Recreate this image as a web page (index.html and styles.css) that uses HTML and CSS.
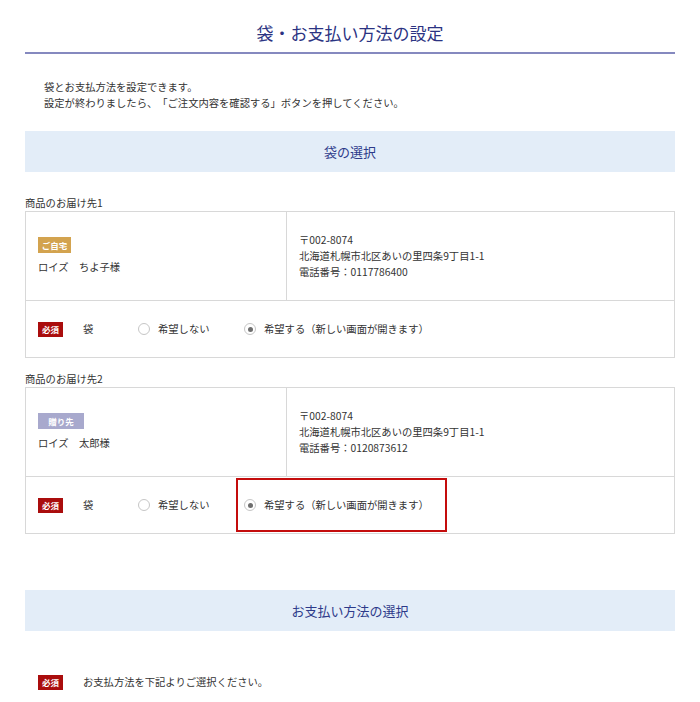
FILE: index.html
```html
<!DOCTYPE html>
<html lang="ja">
<head>
<meta charset="utf-8">
<title>袋・お支払い方法の設定</title>
<link rel="stylesheet" href="styles.css">
</head>
<body>
<div class="page">
  <h1 class="title">袋・お支払い方法の設定</h1>
  <div class="intro">
    <p>袋とお支払方法を設定できます。</p>
    <p>設定が終わりましたら、「ご注文内容を確認する」ボタンを押してください。</p>
  </div>

  <h2 class="sec-head">袋の選択</h2>

  <div class="dest dest-first">
    <p class="dest-label">商品のお届け先1</p>
    <div class="dest-table">
      <div class="dest-info">
        <div class="who">
          <span class="tag tag-home">ご自宅</span>
          <p class="name">ロイズ　ちよ子様</p>
        </div>
        <div class="addr">
          <p>〒002-8074</p>
          <p>北海道札幌市北区あいの里四条9丁目1-1</p>
          <p>電話番号：0117786400</p>
        </div>
      </div>
      <div class="bag-row">
        <span class="req">必須</span>
        <span class="bag-label">袋</span>
        <label class="opt opt-no"><span class="radio"></span>希望しない</label>
        <label class="opt opt-yes"><span class="radio checked"></span>希望する（新しい画面が開きます）</label>
      </div>
    </div>
  </div>

  <div class="dest dest-second">
    <p class="dest-label">商品のお届け先2</p>
    <div class="dest-table">
      <div class="dest-info">
        <div class="who">
          <span class="tag tag-gift">贈り先</span>
          <p class="name">ロイズ　太郎様</p>
        </div>
        <div class="addr">
          <p>〒002-8074</p>
          <p>北海道札幌市北区あいの里四条9丁目1-1</p>
          <p>電話番号：0120873612</p>
        </div>
      </div>
      <div class="bag-row">
        <span class="req">必須</span>
        <span class="bag-label">袋</span>
        <label class="opt opt-no"><span class="radio"></span>希望しない</label>
        <label class="opt opt-yes highlight"><span class="radio checked"></span>希望する（新しい画面が開きます）</label>
      </div>
    </div>
  </div>

  <h2 class="sec-head sec-pay">お支払い方法の選択</h2>

  <div class="pay-row">
    <span class="req">必須</span>
    <span class="pay-text">お支払方法を下記よりご選択ください。</span>
  </div>
</div>
</body>
</html>
```

FILE: styles.css
```css
* { box-sizing: border-box; }

body {
  margin: 0;
  background: #ffffff;
  color: #333333;
  font-family: "Noto Sans CJK JP", "Noto Sans", sans-serif;
  font-size: 10.3px;
  line-height: 16px;
  text-spacing-trim: space-all;
}

p { margin: 0; }

.page {
  padding: 0 25px;
}

.title {
  margin: 0;
  padding: 20px 0 6px;
  line-height: 26px;
  font-size: 17px;
  font-weight: 400;
  text-align: center;
  color: #2b3382;
  border-bottom: 2px solid #8589bf;
}

.intro {
  margin-top: 25px;
  padding-left: 19px;
}

.sec-head {
  margin: 20px 0 0;
  height: 41px;
  line-height: 41px;
  background: #e3edf8;
  text-align: center;
  font-size: 13px;
  font-weight: 400;
  color: #2d3a8a;
}

.dest-first { margin-top: 23px; }
.dest-second { margin-top: 13px; }

.dest-table {
  border: 1px solid #d8d8d8;
}

.dest-info {
  display: flex;
  height: 89px;
  border-bottom: 1px solid #d8d8d8;
}

.who {
  width: 261px;
  border-right: 1px solid #d8d8d8;
  padding-left: 12px;
  display: flex;
  flex-direction: column;
  justify-content: center;
  align-items: flex-start;
}

.tag {
  display: inline-block;
  height: 16px;
  line-height: 16px;
  font-size: 8.5px;
  font-weight: 700;
  color: #ffffff;
  text-align: center;
  margin-bottom: 6px;
}

.tag-home {
  width: 33px;
  background: #d3a34f;
}

.tag-gift {
  width: 46px;
  background: #a8a9cd;
}

.addr {
  flex: 1;
  padding-left: 12px;
  display: flex;
  flex-direction: column;
  justify-content: center;
}

.bag-row {
  display: flex;
  align-items: center;
  height: 56px;
  padding-left: 12px;
}

.req {
  display: inline-block;
  width: 25px;
  height: 15px;
  line-height: 15px;
  background: #aa0d0d;
  color: #ffffff;
  font-size: 8.5px;
  font-weight: 700;
  text-align: center;
}

.bag-label {
  margin-left: 20px;
  width: 55px;
}

.opt {
  display: flex;
  align-items: center;
  gap: 8px;
}

.opt-no {
  width: 98px;
}

.opt-yes {
  width: 211px;
  height: 54px;
  border: 2px solid transparent;
  padding-left: 6px;
}

.opt-yes.highlight {
  border-color: #c40d0d;
}

.radio {
  width: 12px;
  height: 12px;
  border: 1px solid #c6c6c6;
  border-radius: 50%;
  background: #ffffff;
  display: flex;
  align-items: center;
  justify-content: center;
  flex: none;
}

.radio.checked::after {
  content: "";
  width: 5px;
  height: 5px;
  border-radius: 50%;
  background: #6e6e6e;
}

.sec-pay {
  margin-top: 56px;
}

.pay-row {
  display: flex;
  align-items: center;
  margin-top: 43px;
  padding-left: 13px;
}

.pay-text {
  margin-left: 20px;
}
```
